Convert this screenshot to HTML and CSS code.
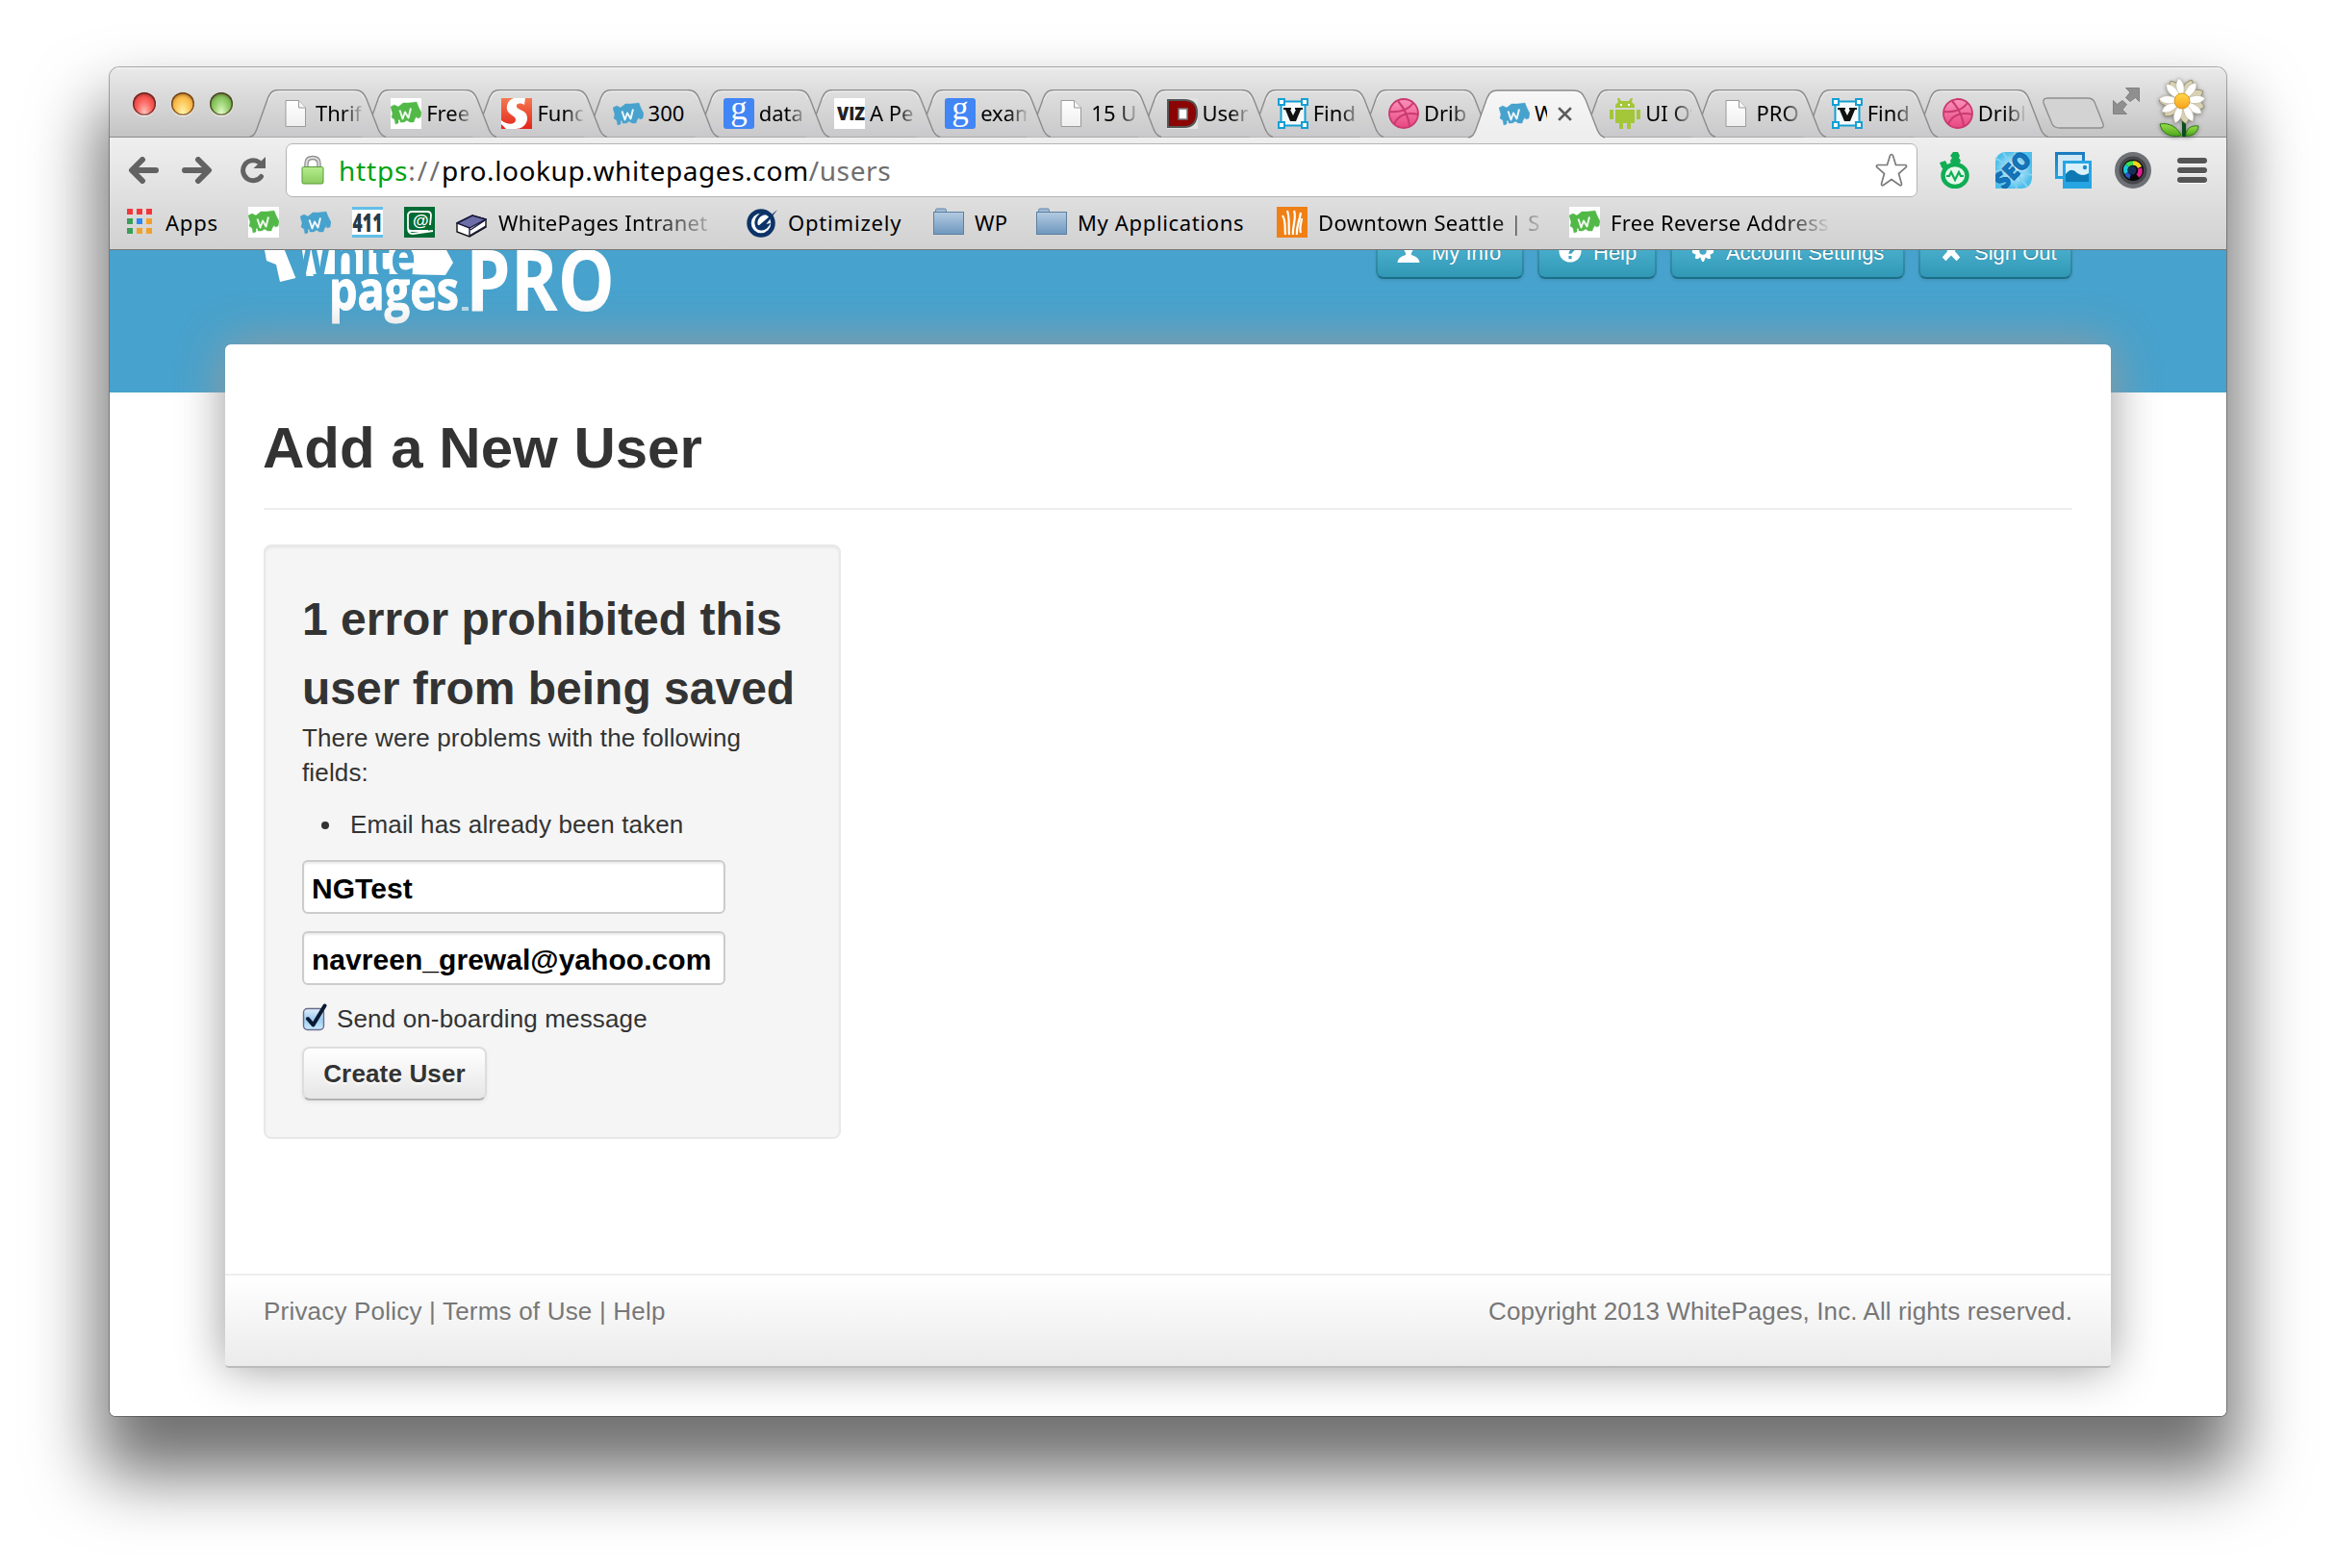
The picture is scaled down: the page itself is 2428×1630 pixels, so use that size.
FILE: index.html
```html
<!DOCTYPE html>
<html lang="en">
<head>
<meta charset="utf-8">
<title>WhitePages PRO - Add a New User</title>
<link rel="stylesheet" href="styles.css">
</head>
<body>
<svg class="defs" width="0" height="0" aria-hidden="true">
  <defs>
    <linearGradient id="g-tab" x1="0" y1="0" x2="0" y2="1"><stop offset="0" stop-color="#dfdfdf"/><stop offset="1" stop-color="#c9c9cb"/></linearGradient>
    <linearGradient id="g-active" x1="0" y1="0" x2="0" y2="1"><stop offset="0" stop-color="#f7f7f7"/><stop offset="1" stop-color="#ededed"/></linearGradient>
    <linearGradient id="g-folder" x1="0" y1="0" x2="0" y2="1"><stop offset="0" stop-color="#b4cbe2"/><stop offset="1" stop-color="#6e97be"/></linearGradient>
    <linearGradient id="g-lock" x1="0" y1="0" x2="0" y2="1"><stop offset="0" stop-color="#b5ec8e"/><stop offset="1" stop-color="#8ccc5f"/></linearGradient>
    <linearGradient id="g-file" x1="0" y1="0" x2="0" y2="1"><stop offset="0" stop-color="#fff"/><stop offset="1" stop-color="#efefef"/></linearGradient>
    <linearGradient id="g-photo" x1="0" y1="0" x2="0" y2="1"><stop offset="0" stop-color="#1c7cc0"/><stop offset="1" stop-color="#1fa3e0"/></linearGradient>
    <linearGradient id="g-s" x1="0" y1="0" x2="0" y2="1"><stop offset="0" stop-color="#f47a50"/><stop offset="1" stop-color="#e3241c"/></linearGradient>
    <linearGradient id="g-ball" x1="0" y1="0" x2="0" y2="1"><stop offset="0" stop-color="#fb93bd"/><stop offset="1" stop-color="#e8467f"/></linearGradient>
    <linearGradient id="g-leaf" x1="0" y1="0" x2="0" y2="1"><stop offset="0" stop-color="#9bdc4a"/><stop offset="1" stop-color="#4ca81b"/></linearGradient>
    <linearGradient id="g-sun" x1="0" y1="0" x2="0" y2="1"><stop offset="0" stop-color="#ffd84a"/><stop offset="1" stop-color="#f9a01b"/></linearGradient>
    <radialGradient id="g-seo"><stop offset="0" stop-color="#f4fbff"/><stop offset="1" stop-color="#4fbfea"/></radialGradient>

    <symbol id="tab" viewBox="0 0 144 50">
      <path d="M0 49.5C5 48.5 6 46 8 41L19 10C22 3 24 .5 31 .5H109C116 .5 119 3 122 10L134 41C136 46 138 48.5 142 49.5Z" stroke="none"/>
      <path d="M0 49.5C5 48.5 6 46 8 41L19 10C22 3 24 .5 31 .5H109C116 .5 119 3 122 10L134 41C136 46 138 48.5 142 49.5" fill="none" stroke="#8b8b8b" stroke-width="1.4"/>
      <path d="M20 11C23 4 25 2 31 2H109C115 2 117 4 120 10" fill="none" stroke="#fff" stroke-opacity=".55"/>
    </symbol>
    <symbol id="file" viewBox="0 0 32 32">
      <path d="M6 2.5H19.5L26.500 10V29.500H6Z" fill="url(#g-file)" stroke="#9b9b9b"/>
      <path d="M19.500 2.500V10H26.500" fill="#f4f4f4" stroke="#9b9b9b"/>
    </symbol>
    <symbol id="wp" viewBox="0 0 32 32">
      <path d="M0 9L4 7L8 9L13 5H19L27 4L29 9L32 15L31 20L28 21L27 19L25 22L24 25H20L17 23L14 25H10V23L8 22V26L5 27L4 22L1 20L2 16Z" stroke-linejoin="round" stroke-width="1" stroke-opacity=".4"/>
      <path d="M9.500 12.500L12.500 21.500L15 14.500L18.500 20.500L21 10.500" fill="none" stroke="#fff" stroke-opacity=".9" stroke-width="2" stroke-linejoin="round"/>
    </symbol>
    <symbol id="wp-green" viewBox="0 0 32 32"><rect width="32" height="32" fill="#fff"/><use href="#wp" width="32" height="32" fill="#52b948" stroke="#52b948"/></symbol>
    <symbol id="wp-blue" viewBox="0 0 32 32"><use href="#wp" width="32" height="32" fill="#47a2cd" stroke="#47a2cd" y="1"/></symbol>
    <symbol id="sflag" viewBox="0 0 32 32">
      <rect width="32" height="32" fill="url(#g-s)"/>
      <path d="M13 0H25L24 7C19 4 15 6 16 9C17 13 28 12 27 22C26 29 20 32 15 32H5L0 27V23C6 28 14 28 15 23C16 18 4 17 6 8C7 3 10 1 13 0Z" fill="#fff"/>
    </symbol>
    <symbol id="google" viewBox="0 0 32 32">
      <rect width="32" height="32" rx="3" fill="#4285f4"/>
      <text x="16" y="21.500" text-anchor="middle" font-family="Liberation Serif, serif" font-size="35" fill="#fff">g</text>
    </symbol>
    <symbol id="viz" viewBox="0 0 32 32">
      <rect width="32" height="32" fill="#fff"/>
      <text x="3" y="23" font-family="Open Sans, sans-serif" font-weight="800" font-size="20" textLength="29" lengthAdjust="spacingAndGlyphs" fill="#222">VIZ</text>
    </symbol>
    <symbol id="dicon" viewBox="0 0 32 32">
      <rect width="32" height="32" fill="#e2e2e2"/><path d="M1 2H18C27 2 31 7 31 15C31 24 27 30 18 30H1Z" fill="#8b0505" stroke="#555" stroke-width="2"/>
      <rect x="12" y="11" width="9" height="11" fill="#fff" stroke="#777" stroke-width="1.500"/>
    </symbol>
    <symbol id="vector" viewBox="0 0 32 32">
      <rect x="3.500" y="3.500" width="25" height="25" fill="#f4fafc" stroke="#159fd4" stroke-width="2"/>
      <g fill="#fff" stroke="#159fd4" stroke-width="2"><rect x="1" y="1" width="6" height="6"/><rect x="25" y="1" width="6" height="6"/><rect x="1" y="25" width="6" height="6"/><rect x="25" y="25" width="6" height="6"/></g>
      <path d="M6 10H14V12H13L16 18L19 12H18V10H26V12H24L19 24H13L8 12H6Z" fill="#111"/>
    </symbol>
    <symbol id="ball" viewBox="0 0 32 32">
      <circle cx="16" cy="16" r="15" fill="url(#g-ball)" stroke="#c93a6e" stroke-width="1.800"/>
      <path d="M10 3C16 10 21 19 22 29M1 14C12 15 21 12 26 5M6 27C10 18 19 14 31 17" fill="none" stroke="#c93a6e" stroke-width="2"/>
    </symbol>
    <symbol id="android" viewBox="0 0 32 32" fill="#a4c639">
      <path d="M6 10V7L9 4L8 0H10L12 3H20L22 0H24L23 4L26 7V10ZM6 12H26V26H22V32H18V26H14V32H10V26H6ZM0 12H4V22H0ZM28 12H32V22H28Z"/>
      <path d="M11 6H13V8H11ZM19 6H21V8H19Z" fill="#fff"/>
    </symbol>
    <symbol id="four11" viewBox="0 0 32 32">
      <rect width="32" height="32" fill="#fff"/><path d="M0 0H32V3H0ZM0 29H32V32H0Z" fill="#63bde8"/>
      <text x="0.500" y="26" font-family="Open Sans, sans-serif" font-weight="800" font-size="27" textLength="31" lengthAdjust="spacingAndGlyphs" fill="#253b4a">411</text>
    </symbol>
    <symbol id="at" viewBox="0 0 32 32">
      <rect width="32" height="32" fill="#026b34"/><path d="M25 25H7Q4 25 4 22V8Q5 5 8 5H24Q28 5 28 9L27 19M4 22Q4 28 9 28L30 25" fill="none" stroke="#fff" stroke-width="1.800"/>
      <text x="17.500" y="20" text-anchor="middle" font-family="Liberation Sans, sans-serif" font-weight="700" font-size="17" fill="#fff">@</text>
    </symbol>
    <symbol id="book" viewBox="0 0 32 32">
      <path d="M1 17L17 9L31 13V21L14 31L1 26Z" fill="#fff" stroke="#111" stroke-width="1.400"/>
      <path d="M1 17L17 9L31 13L14 22Z" fill="#6d6ea8" stroke="#16163a" stroke-width="1.400"/>
      <path d="M14 22V30M30 14L15 24M31 20L14 30" fill="none" stroke="#16163a" stroke-width="1.400"/>
    </symbol>
    <symbol id="optimizely" viewBox="0 0 32 32">
      <circle cx="15" cy="17" r="12.500" fill="#fff" stroke="#0c3468" stroke-width="4.500"/>
      <path d="M32 3L18 21Q15 24 12 20L32 3Z" fill="#0c3468"/><path d="M23 7C15 5 9 12 10 18C11 24 18 25 22 19L11 21" fill="none" stroke="#0c3468" stroke-width="3"/>
    </symbol>
    <symbol id="folder" viewBox="0 0 32 32">
      <path d="M2.500 5V3.500Q2.500 2 4 2H12Q13.500 2 13.500 3.500V5" fill="#9fbcd8" stroke="#6285a8"/>
      <rect x=".5" y="5.500" width="31" height="23" fill="url(#g-folder)" stroke="#5d7f9f"/>
    </symbol>
    <symbol id="seattle" viewBox="0 0 32 32">
      <rect width="32" height="32" fill="#f08015"/>
      <path d="M6 9C10 15 8 23 9 29M11 4C14 14 12 21 13 29M17 29C16 20 21 12 18 4M21 29C20 21 24 14 25 6M25 27C23 21 26 16 26 12" fill="none" stroke="#fff" stroke-width="2.200"/>
    </symbol>
    <symbol id="timer" viewBox="0 0 38 38">
      <ellipse cx="20" cy="24.500" rx="12.500" ry="11.500" fill="#e6f8ec" stroke="#10ad55" stroke-width="4.500"/>
      <path d="M18 0H23L25 4L24 6L26 9L24 13H16L15 9L17 6L15 4ZM4 11L10 9L13 15L9 19L6 16Z" fill="#10ad55"/>
      <path d="M11 25H14L16 21L20 29L24 21L26 25H29" fill="none" stroke="#10ad55" stroke-width="2.200"/>
    </symbol>
    <symbol id="seo" viewBox="0 0 38 38">
      <path d="M0 10Q1 1 10 0H38V28Q37 37 28 38H0Z" fill="url(#g-seo)"/>
      <path d="M19 19L0 6M19 19L8 0M19 19L20 0M19 19L38 24M19 19L33 36M19 19L22 38M19 19L10 38M19 19L0 20" stroke="#7fd2f2" stroke-width="2"/>
      <text transform="translate(9 40) rotate(-46)" x="0" y="0" font-family="Open Sans, sans-serif" font-weight="800" font-size="24" textLength="43" lengthAdjust="spacingAndGlyphs" fill="#1176bd" stroke="#0a4d90" stroke-width=".6">SEO</text>
    </symbol>
    <symbol id="photos" viewBox="0 0 38 38">
      <rect x="1.500" y="1.500" width="28" height="25" fill="#d2e8f5" stroke="url(#g-photo)" stroke-width="3"/>
      <rect x="8" y="9" width="30" height="29" fill="#26a5e2"/><rect x="11" y="12" width="24" height="19" fill="#d9f0fb"/>
      <path d="M11 23Q17 15 23 22Q29 26 35 22V31H11Z" fill="#0c79b5"/><circle cx="31" cy="16" r="2.200" fill="#1c8cc8"/>
    </symbol>
    <symbol id="lens" viewBox="0 0 38 38">
      <circle cx="19" cy="19" r="19" fill="#6d7075"/><circle cx="19" cy="19" r="14.500" fill="#45474b"/><circle cx="19" cy="19" r="11" fill="#070707"/>
      <g fill="none" stroke-width="4.500"><path d="M12 22A7.500 7.500 0 0 1 13 14" stroke="#17c8d8"/><path d="M13 14A7.500 7.500 0 0 1 19 11.500" stroke="#3fdc4a"/><path d="M19 11.500A7.500 7.500 0 0 1 26 16" stroke="#f3d321"/><path d="M26 17A7.500 7.500 0 0 1 24 25" stroke="#e0218c"/><path d="M12 22A7.500 7.500 0 0 0 16 26" stroke="#2a56c8"/></g>
      <circle cx="18" cy="19" r="4.500" fill="#14305a"/>
    </symbol>
    <symbol id="arrow" viewBox="0 0 32 28">
      <path d="M15 3L4 14L15 25M5 14H29" fill="none" stroke="#626262" stroke-width="6" stroke-linecap="round" stroke-linejoin="round"/>
    </symbol>
  </defs>
</svg>

<main class="window">
  <div class="tabstrip">
    <div class="lights"><i class="light red"></i><i class="light amber"></i><i class="light green"></i></div>
    <div class="tabs">
      <div class="tab"><svg class="shape"><use href="#tab"/></svg><svg class="fav"><use href="#file"/></svg><span>Thrift</span></div>
      <div class="tab"><svg class="shape"><use href="#tab"/></svg><svg class="fav"><use href="#wp-green"/></svg><span>Free</span></div>
      <div class="tab"><svg class="shape"><use href="#tab"/></svg><svg class="fav"><use href="#sflag"/></svg><span>Func</span></div>
      <div class="tab"><svg class="shape"><use href="#tab"/></svg><svg class="fav"><use href="#wp-blue"/></svg><span class="full">300</span></div>
      <div class="tab"><svg class="shape"><use href="#tab"/></svg><svg class="fav"><use href="#google"/></svg><span>data</span></div>
      <div class="tab"><svg class="shape"><use href="#tab"/></svg><svg class="fav"><use href="#viz"/></svg><span>A Pe</span></div>
      <div class="tab"><svg class="shape"><use href="#tab"/></svg><svg class="fav"><use href="#google"/></svg><span>exam</span></div>
      <div class="tab"><svg class="shape"><use href="#tab"/></svg><svg class="fav"><use href="#file"/></svg><span>15 U</span></div>
      <div class="tab"><svg class="shape"><use href="#tab"/></svg><svg class="fav"><use href="#dicon"/></svg><span>User</span></div>
      <div class="tab"><svg class="shape"><use href="#tab"/></svg><svg class="fav"><use href="#vector"/></svg><span>Find</span></div>
      <div class="tab"><svg class="shape"><use href="#tab"/></svg><svg class="fav"><use href="#ball"/></svg><span>Drib</span></div>
      <div class="tab active"><svg class="shape"><use href="#tab"/></svg><svg class="fav"><use href="#wp-blue"/></svg><span>W</span><svg class="close" viewBox="0 0 16 16"><path d="M2 2L14 14M14 2L2 14" stroke="#5c5c5c" stroke-width="2.600"/></svg></div>
      <div class="tab"><svg class="shape"><use href="#tab"/></svg><svg class="fav"><use href="#android"/></svg><span>UI Ov</span></div>
      <div class="tab"><svg class="shape"><use href="#tab"/></svg><svg class="fav"><use href="#file"/></svg><span>PRO</span></div>
      <div class="tab"><svg class="shape"><use href="#tab"/></svg><svg class="fav"><use href="#vector"/></svg><span>Find</span></div>
      <div class="tab"><svg class="shape"><use href="#tab"/></svg><svg class="fav"><use href="#ball"/></svg><span>Dribl</span></div>
    </div>
    <svg class="newtab" viewBox="0 0 66 34"><path d="M6 1H48Q53 1 55 5L64 28Q65 32 61 32H19Q13 32 11 28L2 6Q1 1 6 1Z" fill="#d3d3d3" stroke="#8f8f8f" stroke-width="1.400"/></svg>
    <svg class="expand" viewBox="0 0 28 28"><g fill="#8f8f8f" stroke="#757575" stroke-width=".8"><path d="M13.500 .5H27.500V14.500L23.500 10.500L18 14.500L13.500 10.500L18 5Z"/><path d="M14.500 27.500H.5V13.500L4.500 17.500L10 13.500L14.500 17.500L10 23Z"/></g></svg>
    <svg class="daisy" viewBox="0 0 50 62">
      <path d="M26 40V62" stroke="#0b4d1e" stroke-width="4"/>
      <path d="M23 61C10 63 3 58 1 49C11 47 20 53 23 61Z" fill="url(#g-leaf)" stroke="#2d7a12"/>
      <path d="M28 61C28 54 33 50 41 51C40 58 35 62 28 61Z" fill="url(#g-leaf)" stroke="#2d7a12"/>
      <g transform="translate(24 25)">
        <g fill="#d9d1b4" stroke="#8f8562" stroke-width=".8">
          <path id="pt" d="M-2 -5C-6 -14 -6 -19 0 -24C6 -19 6 -14 2 -5Z" transform="rotate(25)"/>
          <use href="#pt" transform="rotate(40)"/><use href="#pt" transform="rotate(80)"/><use href="#pt" transform="rotate(145)"/><use href="#pt" transform="rotate(205)"/><use href="#pt" transform="rotate(245)"/><use href="#pt" transform="rotate(305)"/>
        </g>
        <g fill="#fff" stroke="#b7b09a" stroke-width=".6">
          <path id="pw" d="M-2 -5C-5 -14 -5 -19 0 -24C5 -19 5 -14 2 -5Z" transform="rotate(-8)"/>
          <use href="#pw" transform="rotate(46)"/><use href="#pw" transform="rotate(92)"/><use href="#pw" transform="rotate(130)"/><use href="#pw" transform="rotate(160)"/><use href="#pw" transform="rotate(205)"/><use href="#pw" transform="rotate(250)"/><use href="#pw" transform="rotate(283)"/><use href="#pw" transform="rotate(325)"/>
        </g>
        <circle r="8" fill="url(#g-sun)" stroke="#c98b14" stroke-width=".8"/>
      </g>
    </svg>
  </div>

  <div class="toolbar">
    <div class="navrow">
      <svg class="navicon" viewBox="0 0 32 28"><use href="#arrow"/></svg>
      <svg class="navicon flip" viewBox="0 0 32 28"><use href="#arrow"/></svg>
      <svg class="reload" viewBox="0 0 28 28"><path d="M22.500 20.500A10.500 10.500 0 1 1 20 5.500" fill="none" stroke="#626262" stroke-width="5" stroke-linecap="round"/><path d="M27 0V12H14.500Z" fill="#626262"/></svg>
      <div class="omnibox">
        <svg class="lock" viewBox="0 0 24 32"><path d="M5.500 13V9Q5.500 3 12 3T18.500 9V13" fill="none" stroke="#8b8b8b" stroke-width="4.400"/><path d="M5.500 13V9Q5.500 3 12 3T18.500 9V13" fill="none" stroke="#dcdcdc" stroke-width="2"/><rect x="1" y="12.500" width="22" height="17.500" rx="1.500" fill="url(#g-lock)" stroke="#5a9a3c"/></svg>
        <span class="url"><b>https</b><i class="sep">://</i>pro.lookup.whitepages.com<i>/users</i></span>
        <svg class="star" viewBox="0 0 34 36"><path d="M17 1.500Q18 1.500 18.600 3L21.500 12.500H31.500Q33.500 13.500 32 15L24.500 21.500L27.500 32Q27.500 34.500 25.500 33.500L17 27.500L8.500 33.500Q6.500 34.500 6.500 32L9.500 21.500L2 15Q.5 13.500 2.500 12.500H12.500L15.400 3Q16 1.500 17 1.500Z" fill="#fff" stroke="#7a7a7a" stroke-width="1.700"/></svg>
      </div>
      <div class="extensions">
        <svg><use href="#timer"/></svg><svg><use href="#seo"/></svg><svg><use href="#photos"/></svg><svg><use href="#lens"/></svg>
      </div>
      <div class="menu"><i></i><i></i><i></i></div>
    </div>
    <div class="bookmarks">
      <div class="bm apps"><svg viewBox="0 0 28 32"><path d="M0 2H6V8H0ZM10 2H16V8H10ZM20 2H26V8H20Z" fill="#f2373b"/><path d="M0 12H6V18H0ZM0 22H6V28H0Z" fill="#3a9e58"/><path d="M10 12H16V18H10Z" fill="#2b87f3"/><path d="M20 12H26V18H20ZM10 22H16V28H10ZM20 22H26V28H20Z" fill="#f0a12c"/></svg><span>Apps</span></div>
      <div class="bm"><svg><use href="#wp-green"/></svg></div>
      <div class="bm"><svg><use href="#wp-blue"/></svg></div>
      <div class="bm"><svg><use href="#four11"/></svg></div>
      <div class="bm"><svg><use href="#at"/></svg></div>
      <div class="bm intranet"><svg><use href="#book"/></svg><span>WhitePages Intranet</span></div>
      <div class="bm optimizely"><svg><use href="#optimizely"/></svg><span>Optimizely</span></div>
      <div class="bm wp"><svg><use href="#folder"/></svg><span>WP</span></div>
      <div class="bm myapps"><svg><use href="#folder"/></svg><span>My Applications</span></div>
      <div class="bm seattle"><svg><use href="#seattle"/></svg><span>Downtown Seattle | S</span></div>
      <div class="bm reverse"><svg><use href="#wp-green"/></svg><span>Free Reverse Address</span></div>
    </div>
  </div>

  <div class="page">
    <header class="masthead">
      <svg class="logo" viewBox="0 0 370 80" aria-label="White pages PRO">
        <path d="M1 0H190L197 13L189 26L163 25.500L153 25H40L33 0H22L33.500 29L17 33L13 15L3 11Z" fill="#fff"/>
        <path d="M22 0L34 30L44 28L40 0Z" fill="#47a2cd"/>
        <path d="M48 15L52 27H44Z" fill="#fff"/>
        <text x="28" y="25.500" font-family="Open Sans, sans-serif" font-weight="700" font-size="54" textLength="130" lengthAdjust="spacingAndGlyphs" fill="#47a2cd">White</text>
        <text x="68" y="62" font-family="Open Sans, sans-serif" font-weight="700" font-size="57" textLength="135" lengthAdjust="spacingAndGlyphs" fill="#fff" stroke="#fff" stroke-width="1">pages</text>
        <path d="M206 59H213V63H206Z" fill="#b9dcec"/>
        <text x="210" y="63" font-family="Open Sans, sans-serif" font-weight="700" font-size="87" textLength="155" lengthAdjust="spacingAndGlyphs" fill="#fff">PRO</text>
      </svg>
      <nav class="usernav">
        <a class="navbtn b1"><svg viewBox="0 0 26 26"><path d="M13 1C18 1 19 4 19 8C19 12 16 14 16 17C20 19 25 20 25.500 26H.5C1 20 6 19 10 17C10 14 7 12 7 8C7 4 8 1 13 1Z"/></svg>My Info</a>
        <a class="navbtn b2"><svg viewBox="0 0 26 26"><circle cx="13" cy="13" r="12.500"/><path d="M9 10C9 4 18 5 17 10C17 12 13 12.500 13 16M13 18.500V22" fill="none" stroke="#3da3bd" stroke-width="3.400"/></svg>Help</a>
        <a class="navbtn b3"><svg viewBox="0 0 26 26"><path d="M11 1H15L16 5L20 3L23 6L21 10L25 12V15L21 17L22 21L19 22L16 20L14 25H12L10 20L7 22L4 21L5 17L1 15V12L5 10L3 6L6 3L10 5ZM13 9A4 4 0 1 0 13 17A4 4 0 1 0 13 9Z" fill-rule="evenodd"/></svg>Account Settings</a>
        <a class="navbtn b4"><svg viewBox="0 0 26 26"><path d="M7 3L13 9L19 3L23 7L17 13L23 20L19 24L13 18L7 24L3 20L9 13L3 7Z"/></svg>Sign Out</a>
      </nav>
    </header>
    <section class="card">
      <div class="content">
        <h1>Add a New User</h1>
        <form class="well">
          <h2>1 error prohibited this<br>user from being saved</h2>
          <p>There were problems with the following<br>fields:</p>
          <ul><li>Email has already been taken</li></ul>
          <div class="field">NGTest</div>
          <div class="field">navreen_grewal@yahoo.com</div>
          <label><svg class="check" viewBox="0 0 28 30"><defs><linearGradient id="g-cb" x1="0" y1="0" x2="0" y2="1"><stop offset="0" stop-color="#e3f0fb"/><stop offset=".5" stop-color="#9ccaf0"/><stop offset="1" stop-color="#c9ecff"/></linearGradient></defs><rect x="1.500" y="5.500" width="21" height="22" rx="4" fill="url(#g-cb)" stroke="#6a6d8c" stroke-width="1.400"/><path d="M6 16L11.500 22.500L23.500 2.500" fill="none" stroke="#0a1c33" stroke-width="4" stroke-linecap="round" stroke-linejoin="round"/></svg><span>Send on-boarding message</span></label>
          <button type="button">Create User</button>
        </form>
      </div>
      <footer><span class="links">Privacy Policy | Terms of Use | Help</span><span>Copyright 2013 WhitePages, Inc. All rights reserved.</span></footer>
    </section>
  </div>
</main>
</body>
</html>
```
FILE: styles.css
```css
* { box-sizing: border-box; }
body {
  margin: 0;
  height: 1630px;
  padding: 70px 114px 0;
  background: #fff;
  overflow: hidden;
  font-family: "Liberation Sans", Arial, sans-serif;
  color: #333;
}
svg { display: block; flex: none; }
.defs { position: absolute; }

.window {
  width: 2200px;
  height: 1402px;
  border-radius: 10px 10px 6px 6px;
  overflow: hidden;
  box-shadow: 0 0 0 1px rgba(0, 0, 0, .3), 0 50px 70px 12px rgba(0, 0, 0, .56);
}

/* Tab strip */
.tabstrip {
  display: flex;
  height: 73px;
  background: linear-gradient(#f4f4f4 0, #e8e8e8 3px, #c4c4c4);
  border-bottom: 1px solid #8b8b8b;
}
.lights { display: flex; gap: 16px; padding: 26px 0 0 24px; width: 158px; flex: none; }
.light { width: 24px; height: 24px; border-radius: 50%; box-shadow: inset 0 0 0 1.500px rgba(60, 20, 10, .55), inset 0 3px 3px rgba(60, 20, 10, .35), 0 1px 1px #fff; }
.red { background: radial-gradient(ellipse at 50% 90%, #ffc3bd 0, #fb5a55 50%, #d93b3a 100%); }
.amber { background: radial-gradient(ellipse at 50% 90%, #fff6b0 0, #fcc04f 50%, #e3962f 100%); }
.green { background: radial-gradient(ellipse at 50% 90%, #e2fbc5 0, #8dca65 50%, #5da043 100%); }

.tabs { display: flex; padding-top: 23px; flex: none; }
.tab {
  position: relative;
  z-index: 1;
  display: flex;
  width: 115.2px;
  height: 50px;
  padding: 9px 0 0 19px;
  gap: 5px;
}
/* Each tab overlaps the one to its right */
.tab:nth-child(-n+14) { z-index: 2; }
.tab:nth-child(-n+13) { z-index: 3; }
.tab:nth-child(-n+12) { z-index: 4; }
.tab:nth-child(-n+11) { z-index: 5; }
.tab:nth-child(-n+10) { z-index: 6; }
.tab:nth-child(-n+9) { z-index: 7; }
.tab:nth-child(-n+8) { z-index: 8; }
.tab:nth-child(-n+7) { z-index: 9; }
.tab:nth-child(-n+6) { z-index: 10; }
.tab:nth-child(-n+5) { z-index: 11; }
.tab:nth-child(-n+4) { z-index: 12; }
.tab:nth-child(-n+3) { z-index: 13; }
.tab:nth-child(-n+2) { z-index: 14; }
.tab:nth-child(1) { z-index: 15; }
.tab:nth-child(16) { z-index: 0; }
.tab.active { z-index: 20; }
.shape { position: absolute; left: -13px; top: 0; width: 144px; height: 50px; fill: url(#g-tab); }
.active .shape { fill: url(#g-active); height: 51px; }
.fav { position: relative; width: 32px; height: 32px; }
.tab span {
  position: relative;
  width: 48px;
  height: 32px;
  flex: none;
  overflow: hidden;
  font: 22px/30px "Noto Sans", "Open Sans", sans-serif;
  color: #000;
  white-space: nowrap;
  -webkit-mask-image: linear-gradient(90deg, #000 60%, transparent 105%);
  mask-image: linear-gradient(90deg, #000 60%, transparent 105%);
}
.tab span.full { -webkit-mask-image: none; mask-image: none; }
.tab.active span { width: 13px; -webkit-mask-image: none; mask-image: none; }
.close { position: relative; width: 17px; height: 17px; margin: 8px 0 0 5px; }
.newtab { width: 66px; height: 34px; margin: 31px 0 0 7px; }
.expand { width: 28px; height: 28px; margin: 21px 0 0 8px; }
.daisy { width: 50px; height: 62px; margin: 10px 0 0 20px; filter: drop-shadow(0 1px 2px rgba(0, 0, 0, .4)); }

/* Toolbar */
.toolbar {
  height: 117px;
  background: linear-gradient(#efefef, #d1d1d1);
  border-bottom: 1px solid #757575;
}
.navrow { display: flex; padding: 6px 20px 0 19px; height: 68px; }
.navicon { width: 32px; height: 28px; margin: 14px 24px 0 0; }
.flip { transform: scaleX(-1); }
.reload { width: 28px; height: 28px; margin: 14px 20px 0 4px; }
.omnibox {
  display: flex;
  align-items: center;
  width: 1697px;
  height: 56px;
  border: 1.500px solid #b4b4b4;
  border-radius: 7px;
  background: #fff;
  padding: 0 9px 0 15px;
}
.lock { width: 24px; height: 32px; }
.url { flex: 1; margin-left: 15px; font: 28px/54px "Noto Sans", "Open Sans", sans-serif; letter-spacing: .6px; color: #000; }
.url b { font-weight: 400; color: #00a215; letter-spacing: .8px; }
.url i { font-style: normal; color: #6e6e6e; }
.url .sep { letter-spacing: 2.200px; }
.star { width: 34px; height: 36px; }
.extensions { display: flex; gap: 24px; margin: 9px 27px 0 19px; }
.extensions svg { width: 38px; height: 38px; }
.menu { display: flex; flex-direction: column; gap: 4px; padding-top: 15px; }
.menu i { width: 31px; height: 6px; border-radius: 3px; background: #555; box-shadow: 0 1px 0 #fff; }
.bookmarks { display: flex; gap: 22px; padding: 4px 0 0 18px; }
.bm { display: flex; gap: 11px; height: 34px; font: 22px/32px "Noto Sans", "Open Sans", sans-serif; letter-spacing: .3px; color: #000; white-space: nowrap; }
.bm svg { width: 32px; height: 32px; }
.bm.apps svg { width: 28px; }
.bm span { overflow: hidden; }
.apps span { width: 65px; letter-spacing: .8px; padding-left: 1px; }
.intranet span { width: 237px; padding-left: 1px; }
.optimizely span { width: 129px; letter-spacing: .8px; }
.wp span { width: 42px; }
.myapps span { width: 185px; letter-spacing: .65px; }
.seattle span { width: 239px; letter-spacing: .35px; }
.reverse span { width: 230px; }
.intranet span { -webkit-mask-image: linear-gradient(90deg, #000 65%, transparent 100%); mask-image: linear-gradient(90deg, #000 65%, transparent 100%); }
.seattle span, .reverse span { -webkit-mask-image: linear-gradient(90deg, #000 76%, transparent 100%); mask-image: linear-gradient(90deg, #000 76%, transparent 100%); }

/* Web page */
.page { height: 1212px; background: #fff; overflow: hidden; }
.masthead {
  display: flex;
  justify-content: space-between;
  height: 148px;
  padding: 0 160px;
  background: #47a2cd;
  overflow: hidden;
}
.logo { width: 370px; height: 80px; }
.usernav { display: flex; gap: 14px; margin-top: -26px; }
.navbtn {
  display: flex;
  align-items: flex-start;
  height: 56px;
  padding: 12px 0 0 20px;
  gap: 12px;
  font-size: 22px;
  line-height: 30px;
  color: #fff;
  white-space: nowrap;
  text-shadow: 0 -1px 1px rgba(0, 0, 0, .3);
  border: 2px solid rgba(30, 90, 110, .32);
  border-bottom-color: rgba(10, 70, 90, .5);
  border-radius: 8px;
  background: linear-gradient(#5bc0de, #2f96b4) border-box;
  box-shadow: 0 2px 3px rgba(0, 0, 0, .08);
}
.navbtn svg { width: 24px; height: 26px; fill: #fff; }
.b1 { width: 154px; }
.b2 { width: 124px; }
.b3 { width: 244px; letter-spacing: -.05px; }
.b4 { width: 160px; }

.card {
  position: relative;
  display: flex;
  flex-direction: column;
  width: 1960px;
  height: 1064px;
  margin: -50px 120px 0;
  border-radius: 6px 6px 4px 4px;
  background: #fff;
  box-shadow: 0 0 50px #999;
}
.content { flex: 1; padding: 78px 40px 0; }
h1 {
  margin: 0 0 36px;
  height: 94px;
  border-bottom: 2px solid #eee;
  font-size: 60px;
  line-height: 59px;
  letter-spacing: 0;
  text-indent: -1px;
}
.well {
  width: 600px;
  height: 618px;
  padding: 40px 38px 0;
  border: 2px solid #e8e8e8;
  border-radius: 8px;
  background: #f5f5f5;
  box-shadow: inset 0 2px 2px rgba(0, 0, 0, .05);
  font-size: 26px;
  line-height: 36px;
  letter-spacing: .14px;
}
h2 { margin: 0 0 -3px; font-size: 48px; line-height: 72px; letter-spacing: 0; white-space: nowrap; }
.well p { margin: 0 0 18px; }
.well ul { margin: 0 0 19px; padding: 0 0 0 50px; list-style: none; }
.well li { display: flex; align-items: center; }
.well li::before { content: ""; width: 8px; height: 8px; margin: 1px 22px 0 -30px; border-radius: 50%; background: #333; }
.field {
  width: 440px;
  height: 56px;
  margin-bottom: 18px;
  padding: 1px 8px;
  border: 2px solid #ccc;
  border-radius: 6px;
  background: #fff;
  box-shadow: inset 0 2px 2px rgba(0, 0, 0, .075);
  font-size: 30px;
  font-weight: 700;
  line-height: 53px;
  letter-spacing: .04px;
  color: #000;
}
label { display: flex; gap: 8px; height: 36px; }
label span { line-height: 34px; }
.check { width: 28px; height: 30px; margin-top: 1px; }
button {
  display: block;
  width: 192px;
  height: 56px;
  margin-top: 10px;
  padding: 0;
  border: 2px solid #ddd;
  border-bottom-color: #b3b3b3;
  border-radius: 8px;
  background: linear-gradient(#fff, #e6e6e6);
  box-shadow: 0 2px 4px rgba(0, 0, 0, .06);
  font: 700 26px/53px "Liberation Sans", Arial, sans-serif;
  letter-spacing: .15px;
  color: #333;
  text-shadow: 0 2px 2px rgba(255, 255, 255, .75);
}
footer {
  display: flex;
  justify-content: space-between;
  height: 98px;
  padding: 19px 40px;
  border-top: 2px solid #eee;
  border-bottom: 2px solid #bbb;
  border-radius: 0 0 4px 4px;
  background: linear-gradient(#fff, #ebebeb);
  font-size: 26px;
  line-height: 36px;
  letter-spacing: .11px;
  color: #777;
}
.links { letter-spacing: .2px; }
```
